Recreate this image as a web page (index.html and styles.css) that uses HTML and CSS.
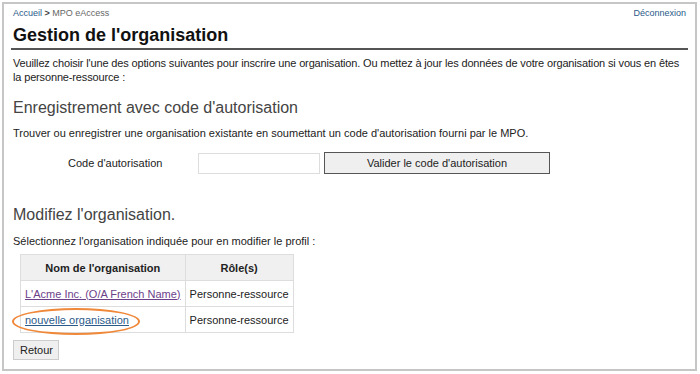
FILE: index.html
```html
<!DOCTYPE html>
<html lang="fr">
<head>
  <meta charset="UTF-8">
  <title>Gestion de l'organisation</title>
  <link rel="stylesheet" href="styles.css">
</head>
<body>

<div class="page">
  <div class="topbar">
    <div class="crumbs"><a href="#">Accueil</a> <span class="sep">&gt;</span> MPO eAccess</div>
    <a href="#" class="logout">Déconnexion</a>
  </div>

  <h1>Gestion de l'organisation</h1>

  <p class="intro">Veuillez choisir l'une des options suivantes pour inscrire une organisation. Ou mettez à jour les données de votre organisation si vous en êtes la personne-ressource :</p>

  <h2>Enregistrement avec code d'autorisation</h2>
  <p>Trouver ou enregistrer une organisation existante en soumettant un code d'autorisation fourni par le MPO.</p>

  <div class="code-form">
    <label for="code">Code d'autorisation</label>
    <input type="text" id="code">
    <button class="validate">Valider le code d'autorisation</button>
  </div>

  <h2 class="edit-title">Modifiez l'organisation.</h2>
  <p>Sélectionnez l'organisation indiquée pour en modifier le profil :</p>

  <table class="orgs">
    <tr>
      <th class="col-name">Nom de l'organisation</th>
      <th class="col-role">Rôle(s)</th>
    </tr>
    <tr>
      <td><a href="#" class="visited">L'Acme Inc. (O/A French Name)</a></td>
      <td>Personne-ressource</td>
    </tr>
    <tr>
      <td><a href="#" class="circled">nouvelle organisation</a></td>
      <td>Personne-ressource</td>
    </tr>
  </table>

  <button class="back">Retour</button>
</div>

</body>
</html>
```

FILE: styles.css
```css
body {
  margin: 0;
  background: white;
  font-family: 'Liberation Sans', Arial, sans-serif;
  font-size: 11px;
  color: #222;
}

.page {
  margin: 2px 0 0 2px;
  width: 695px;
  height: 369px;
  box-sizing: border-box;
  border: 2px solid #c6c6c6;
  padding: 3px 7px 0 7px;
}

a {
  color: #2a5a8a;
}

.topbar {
  display: flex;
  justify-content: space-between;
  font-size: 9px;
  padding: 0 2px;
  line-height: 12px;
  color: #666;
}

.topbar a {
  text-decoration: none;
}

.sep {
  font-weight: bold;
  color: #444;
}

h1 {
  font-size: 18px;
  font-weight: bold;
  color: #111;
  margin: 5px 0 0 0;
  padding: 0 2px 2px 2px;
  line-height: 22px;
  border-bottom: 2px solid #555;
}

p {
  margin: 0 2px;
  line-height: 14px;
}

.intro {
  margin-top: 6px;
  letter-spacing: -0.15px;
}

h2 {
  font-size: 16px;
  font-weight: normal;
  color: #444;
  margin: 15px 2px 9px 2px;
  line-height: 18px;
}

.code-form {
  display: flex;
  align-items: center;
  margin: 12px 0 32px 0;
}

.code-form label {
  width: 96px;
  margin: 0 34px 0 57px;
  white-space: nowrap;
}

.code-form input {
  width: 122px;
  height: 21px;
  box-sizing: border-box;
  border: 1px solid #ddd;
  margin: 0 4px 0 0;
}

.validate {
  width: 226px;
  height: 22px;
  background: #efefef;
  border: 1px solid #555;
  font-family: inherit;
  font-size: 11px;
  color: #222;
}

.edit-title {
  margin-top: 0;
  margin-bottom: 10px;
}

.orgs {
  border-collapse: collapse;
  margin: 6px 0 0 9px;
}

.orgs th,
.orgs td {
  border: 1px solid #ddd;
  height: 25px;
  padding: 0 4px;
  font-size: 11px;
  white-space: nowrap;
}

.orgs th {
  background: #f0f0f0;
  text-align: center;
}

.col-name {
  width: 155px;
}

.col-role {
  width: 98px;
}

.visited {
  color: #6b3f8a;
}

.circled {
  position: relative;
}

.circled::after {
  content: '';
  position: absolute;
  left: -13px;
  top: -6px;
  right: -11px;
  bottom: -9px;
  border: 2px solid #f0883a;
  border-radius: 50%;
}

.back {
  margin: 7px 0 0 2px;
  height: 20px;
  width: 46px;
  background: #efefef;
  border: 1px solid #ccc;
  font-family: inherit;
  font-size: 11px;
  color: #222;
}
```
